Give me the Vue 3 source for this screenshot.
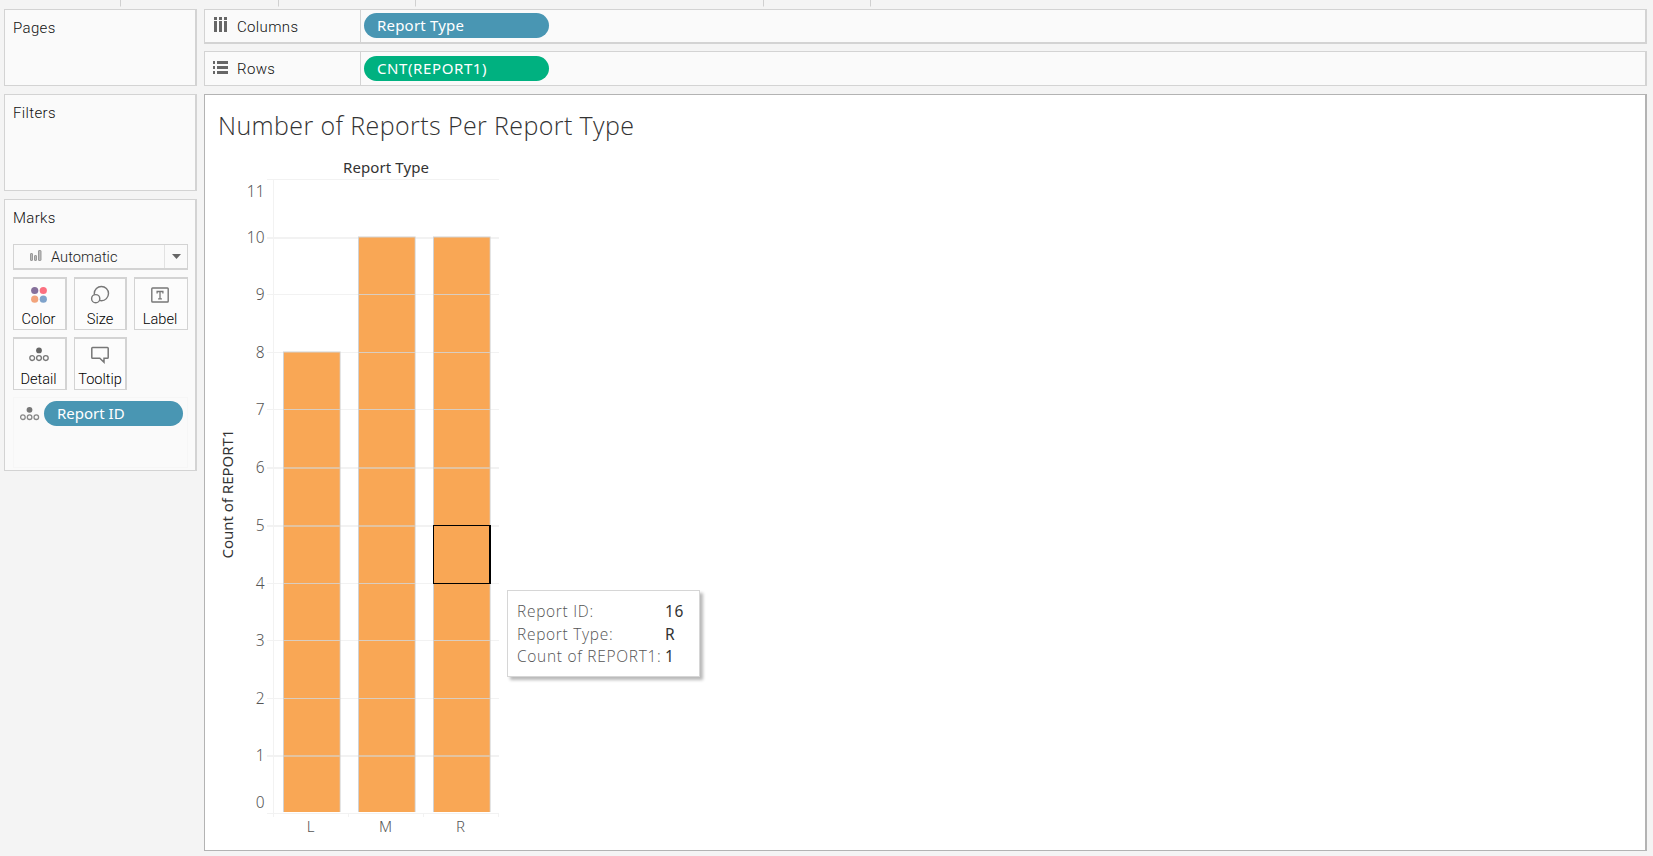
<script setup>
const ticks = [120, 278, 415, 763, 870]
const scale = [11, 10, 9, 8, 7, 6, 5, 4, 3, 2, 1, 0]
const gridY = { 11: 179, 10: 237, 9: 294, 8: 352, 7: 409, 6: 467, 5: 525, 4: 583, 3: 640, 2: 698, 1: 755, 0: 813 }
const thick = [10, 6, 5, 1]
const bars = [
  { name: 'L', x: 284, value: 8 },
  { name: 'M', x: 359, value: 10 },
  { name: 'R', x: 434, value: 10 },
]
const labelY = (n) => (n === 11 ? 197 : n === 0 ? 808 : gridY[n] + 6)
const linesIn = (b) => scale.filter((n) => n > 0 && n < b.value)
</script>

<template>
  <div class="app">
    <svg class="strip" width="1653" height="7">
      <rect v-for="t in ticks" :key="t" :x="t" y="0" width="1" height="6.5" fill="#d0d0d0" />
    </svg>
    <div class="body">
      <aside class="side">
        <section class="card pages"><h2>Pages</h2></section>
        <section class="card filters"><h2>Filters</h2></section>
        <section class="card marks">
          <h2>Marks</h2>
          <div class="select">
            <svg class="bars-ico" width="13" height="13" viewBox="0 0 13 13" fill="#bbb" stroke="#999" stroke-width="1">
              <rect x="1.5" y="3.5" width="2" height="7" rx=".5" /><rect x="5.5" y="5.5" width="2" height="5" rx=".5" /><rect x="9.5" y=".5" width="2.5" height="10" rx=".5" />
            </svg>
            <span class="auto">Automatic</span>
            <span class="arrow"><svg width="9" height="5"><path d="M0 0h9L4.5 5z" fill="#666" /></svg></span>
          </div>
          <div class="buttons">
            <div class="btn">
              <svg width="20" height="20" viewBox="0 0 20 20">
                <circle cx="5.7" cy="5.5" r="3.6" fill="#85709b" /><circle cx="14.3" cy="5.5" r="3.6" fill="#fb7080" />
                <circle cx="5.7" cy="14.2" r="3.6" fill="#f2a47c" /><circle cx="14.3" cy="14.2" r="3.6" fill="#7fa3cb" />
              </svg>
              <span>Color</span>
            </div>
            <div class="btn size">
              <svg width="20" height="20" viewBox="0 0 20 20" stroke="#777" stroke-width="1.4">
                <circle cx="11.4" cy="8.6" r="7.1" fill="none" /><circle cx="5.7" cy="13.7" r="4.1" fill="#fafafa" />
              </svg>
              <span>Size</span>
            </div>
            <div class="btn last">
              <svg width="20" height="20" viewBox="0 0 20 20" fill="none" stroke="#777">
                <rect x="1.8" y="3" width="16.4" height="14" rx=".8" stroke-width="1.4" />
                <path d="M7.1 8.6V6.5h5.8v2.1M10 6.5v7.3M8.1 13.8h3.8" stroke-width="1.3" />
              </svg>
              <span>Label</span>
            </div>
            <div class="btn">
              <svg width="20" height="20" viewBox="0 0 20 20" fill="none" stroke="#777" stroke-width="1.3">
                <circle cx="10" cy="5.4" r="2.9" fill="#666" stroke="none" /><circle cx="3.2" cy="13.1" r="2.4" /><circle cx="10" cy="13.1" r="2.4" /><circle cx="16.8" cy="13.1" r="2.4" />
              </svg>
              <span>Detail</span>
            </div>
            <div class="btn size">
              <svg width="20" height="20" viewBox="0 0 20 20" fill="none" stroke="#777" stroke-width="1.5">
                <path d="M2.6 2.4h14.8q.8 0 .8.8v9.2q0 .8-.8.8H14v4l-4.2-4H2.6q-.8 0-.8-.8V3.2q0-.8.8-.8z" />
              </svg>
              <span>Tooltip</span>
            </div>
          </div>
          <div class="drop">
            <svg width="20" height="16" viewBox="0 0 20 16" fill="none" stroke="#888" stroke-width="1.3">
              <circle cx="9.5" cy="3.8" r="2.9" fill="#777" stroke="none" /><circle cx="2.9" cy="11.2" r="2.3" /><circle cx="9.6" cy="11.2" r="2.3" /><circle cx="16.3" cy="11.2" r="2.3" />
            </svg>
            <span class="pill small">Report ID</span>
          </div>
        </section>
      </aside>

      <main class="main">
        <div class="shelf columns">
          <div class="name">
            <svg width="15" height="15" fill="#666">
              <path d="M1 0h3v3H1zM6 0h3v3H6zM11 0h3v3h-3zM1 4h3v11H1zM6 4h3v11H6zM11 4h3v11h-3z" />
            </svg>
            <span>Columns</span>
          </div>
          <span class="pill type">Report Type</span>
        </div>
        <div class="shelf rows">
          <div class="name">
            <svg width="15" height="15" fill="#666">
              <path d="M0 1h2v3H0zM4 1h11v3H4zM0 6h2v3H0zM4 6h11v3H4zM0 11h2v3H0zM4 11h11v3H4z" />
            </svg>
            <span>Rows</span>
          </div>
          <span class="pill green">CNT(REPORT1)</span>
        </div>
        <div class="view">
          <svg class="chart" width="1440" height="755" viewBox="205 95 1440 755">
            <text class="title" x="218" y="135" textLength="416">Number of Reports Per Report Type</text>
            <text class="head" x="343" y="173" textLength="86">Report Type</text>
            <text class="head" transform="translate(233 558.5) rotate(-90)" textLength="129">Count of REPORT1</text>
            <g fill="#f2f2f2">
              <rect v-for="n in scale" :key="n" x="267" :y="gridY[n]" width="232" :height="thick.includes(n) ? 2 : 1" />
              <rect x="273" y="179" width="1" height="638" />
              <rect x="348" y="813" width="1" height="4" />
              <rect x="423" y="813" width="1" height="4" />
              <rect x="498" y="813" width="1" height="4" />
            </g>
            <text v-for="n in scale" :key="'l' + n" class="num" x="264.5" :y="labelY(n)">{{ n }}</text>
            <g v-for="b in bars" :key="b.name">
              <rect :x="b.x - 1" :y="gridY[b.value] - 0.5" width="57.6" :height="812.5 - gridY[b.value]" fill="#d2d2d2" />
              <rect :x="b.x" :y="gridY[b.value] + 0.5" width="55.7" :height="811.5 - gridY[b.value]" fill="#f9a755" />
              <rect v-for="n in linesIn(b)" :key="n" :x="b.x" :y="gridY[n]" width="56" :height="thick.includes(n) ? 2 : 1" :fill="thick.includes(n) ? '#e3c3a0' : '#d9cdc0'" />
              <text class="cat" :x="b.x + 26.5" y="832">{{ b.name }}</text>
            </g>
            <rect x="434" y="526" width="56" height="57" fill="#f9a755" />
            <path d="M433 525h58v59h-58zM434 526v57h55v-57z" fill="#000" fill-rule="evenodd" />
          </svg>
          <div class="tip">
            <span>Report ID:</span><b>16</b>
            <span>Report Type:</span><b>R</b>
            <span>Count of REPORT1:</span><b>1</b>
          </div>
        </div>
      </main>
    </div>
  </div>
</template>

<style>
body { background: #f4f4f4; overflow: hidden; }
</style>

<style scoped>
.app { width: 1653px; height: 856px; background: #f4f4f4; font-family: "Open Sans", "Noto Sans", sans-serif; color: #333; overflow: hidden; }
.app * { box-sizing: border-box; }
.strip { display: block; }
.body { display: flex; gap: 7px; padding: 2px 0 0 4px; }
.side { width: 193px; display: flex; flex-direction: column; gap: 8px; }
.card { border: 1px solid #d3d3d3; border-right-width: 2px; background: #fafafa; padding: 0 0 0 8px; }
.pages { height: 77px; }
.filters { height: 97px; }
.marks { height: 272px; }
h2 { margin: 7px 0 0; font-family: Roboto, sans-serif; font-size: 15px; font-weight: 300; line-height: 22px; letter-spacing: .35px; color: #111; }
.select { width: 175px; height: 26px; margin-top: 15px; border: 1px solid #d3d3d3; border-bottom-width: 2px; display: flex; align-items: center; font-family: Roboto, sans-serif; font-size: 14.7px; font-weight: 300; color: #222; }
.bars-ico { margin-left: 15px; }
.auto { margin-left: 9px; flex: 1; line-height: 22px; }
.arrow { width: 23px; height: 23px; border-left: 1px solid #e2e2e2; display: flex; align-items: center; justify-content: center; }
.buttons { margin-top: 7px; display: grid; grid-template-columns: 54px 53px 54px; gap: 7px; }
.btn { height: 53px; border: 1px solid #d3d3d3; border-top-width: 2px; border-right-width: 2px; display: flex; flex-direction: column; align-items: center; padding: 6px 2px 0 0; background: #fcfcfc; font-family: Roboto, sans-serif; font-size: 14.6px; font-weight: 300; line-height: 18px; color: #000; white-space: nowrap; }
.btn.size { padding-right: 0; }
.btn.last { border-right-width: 1px; }
.btn svg { flex: none; margin-bottom: 5px; }
.drop { display: flex; width: 175px; height: 71px; margin-top: 7px; border: 1px solid #f6f6f6; padding: 3px 0 0 6px; align-items: flex-start; }
.drop svg { margin-top: 5px; margin-right: 4px; flex: none; }
.pill { display: block; width: 185px; height: 25px; border-radius: 13px; background: #4996b3; color: #fff; font-family: "Noto Sans", sans-serif; font-size: 15px; line-height: 25px; padding-left: 13px; white-space: nowrap; }
.pill.type { letter-spacing: .2px; }
.pill.small { width: 139px; }
.pill.green { background: #00b180; letter-spacing: .6px; }
.main { width: 1443px; display: flex; flex-direction: column; }
.shelf { height: 35px; border: 1px solid #d3d3d3; border-right-width: 2px; background: #fafafa; display: flex; }
.columns { border-bottom-width: 2px; margin-bottom: 7px; }
.rows { margin-bottom: 8px; }
.name { width: 156px; border-right: 1px solid #d3d3d3; display: flex; padding-left: 8px; font-family: Roboto, sans-serif; font-size: 15px; font-weight: 300; letter-spacing: .35px; color: #111; line-height: 22px; }
.name svg { margin-top: 7px; margin-right: 9px; }
.rows .name svg { margin-top: 8px; }
.name span { margin-top: 6px; }
.columns .pill { margin: 3px 0 0 3px; }
.rows .pill { margin: 4px 0 0 3px; }
.view { position: relative; height: 757px; background: #fff; border: 1px solid #b3b3b3; border-right-width: 2px; }
.chart { display: block; font-family: "Noto Sans", sans-serif; }
.title { font-size: 25px; font-weight: 300; fill: #333; font-family: "Open Sans", sans-serif; }
.head { font-size: 15px; fill: #333; }
.num { font-size: 15.5px; fill: #555; text-anchor: end; font-weight: 300; }
.cat { font-size: 15px; fill: #555; text-anchor: middle; font-weight: 300; }
.tip { position: absolute; left: 302px; top: 495px; width: 193px; height: 87px; background: #fff; border: 1px solid #d6d6d6; box-shadow: 3px 3px 3px rgba(0, 0, 0, .28); padding: 9px 0 0 9px; display: grid; grid-template-columns: 148px 1fr; grid-auto-rows: 22.5px; align-content: start; line-height: 22px; font-size: 15.5px; letter-spacing: .7px; color: #555; font-weight: 300; white-space: nowrap; }
.tip b { font-weight: 400; color: #333; letter-spacing: .6px; font-family: "Noto Sans", sans-serif; }
</style>
